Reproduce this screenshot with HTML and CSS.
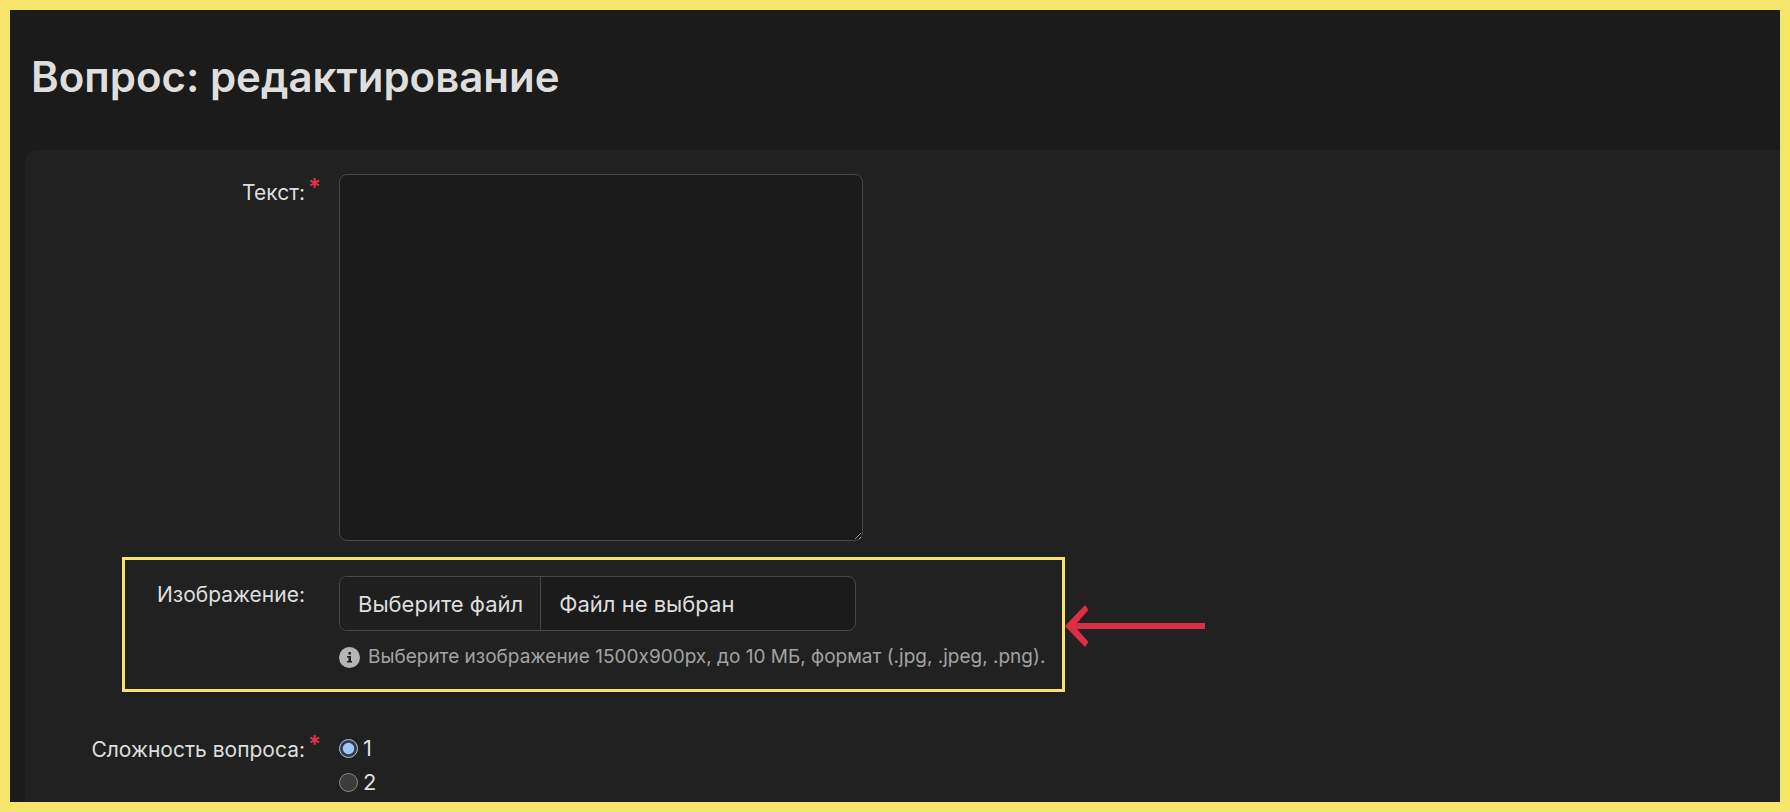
FILE: index.html
```html
<!DOCTYPE html>
<html lang="ru">
<head>
    <meta charset="UTF-8">
    <meta name="viewport" content="width=device-width, initial-scale=1.0">
    <title>Вопрос: редактирование</title>
    <link rel="stylesheet" href="styles.css">
</head>
<body>
    <main class="page">
        <h1>Вопрос: редактирование</h1>

        <form class="panel">
            <div class="form-row">
                <label class="form-label required" for="text">Текст:</label>
                <textarea id="text" required></textarea>
            </div>

            <div class="form-row highlight">
                <label class="form-label" for="image">Изображение:</label>
                <div class="form-field">
                    <div class="file">
                        <span class="file-button">Выберите файл</span>
                        <span class="file-name">Файл не выбран</span>
                        <input type="file" id="image" accept=".jpg,.jpeg,.png">
                    </div>
                    <p class="hint">
                        <svg class="hint-icon" viewBox="0 0 21 21" aria-hidden="true">
                            <circle cx="10.5" cy="10.5" r="10.5" fill="#b5b5b5"/>
                            <path d="M9.500 5h2.500v2.500H9.500zM8 9h4v5h1v1.500H8V14h1.500v-3.500H8z" fill="#212121"/>
                        </svg>
                        Выберите изображение 1500x900px, до 10 МБ, формат (.jpg, .jpeg, .png).
                    </p>
                </div>
                <svg class="arrow" viewBox="0 0 140 42" aria-hidden="true">
                    <path d="M140 18H12L23.500 5 20 0 0 21l20 21 3.500-5L12 24h128z" fill="#dc2e45"/>
                </svg>
            </div>

            <fieldset class="form-row">
                <legend class="form-label required">Сложность вопроса:</legend>
                <div class="form-field radios">
                    <label><input type="radio" name="level" value="1" checked>1</label>
                    <label><input type="radio" name="level" value="2">2</label>
                </div>
            </fieldset>
        </form>
    </main>
</body>
</html>
```
FILE: styles.css
```css
* {
    margin: 0;
    padding: 0;
    box-sizing: border-box;
}
body {
    height: 100vh;
    overflow: hidden;
    border: 10px solid #f5e66b;
    background: #1b1b1b;
    color: #dedede;
    font-family: Inter, sans-serif;
    font-size: 22px;
    line-height: 28px;
    color-scheme: dark;
}
.page {
    height: 100%;
    display: flex;
    flex-direction: column;
    padding-left: 15px;
}
h1 {
    padding: 41px 6px 47px;
    font-size: 42px;
    line-height: 52px;
    font-weight: 600;
}
.panel {
    flex: 1;
    padding-top: 24px;
    border-top-left-radius: 12px;
    background: #212121;
}
.form-row {
    position: relative;
    display: flex;
    align-items: flex-start;
    border: none;
}
.form-label {
    position: relative;
    flex: none;
    width: 314px;
    padding: 5px 34px 0 0;
    font-size: 21px;
    text-align: right;
}
.required::after {
    content: "*";
    position: absolute;
    top: 0;
    right: 18px;
    color: #dc3545;
    font-size: 24px;
    font-weight: 600;
}
textarea {
    width: 524px;
    height: 367px;
    padding: 12px 18px;
    border: 1px solid #484848;
    border-radius: 8px;
    background: #1b1b1b;
    color: inherit;
    font: inherit;
    resize: both;
}
.highlight {
    width: fit-content;
    margin: 16px 0 39px 97px;
    padding: 16px 17px 18px 0;
    border: 3px solid #f9e36e;
}
.highlight .form-label {
    width: 214px;
}
.file {
    position: relative;
    display: flex;
    width: 517px;
    border: 1px solid #484848;
    border-radius: 8px;
    background: #1b1b1b;
    overflow: hidden;
}
.file span {
    padding: 13px 17px 12px 18px;
}
.file-button {
    border-right: 1px solid #484848;
    background: #1f1f1f;
}
.file input {
    position: absolute;
    inset: 0;
    opacity: 0;
    cursor: pointer;
}
.hint {
    display: flex;
    align-items: center;
    gap: 8px;
    margin-top: 12px;
    color: #a3a3a3;
    font-size: 19px;
}
.hint-icon {
    width: 21px;
    height: 21px;
}
.arrow {
    position: absolute;
    top: 45px;
    left: calc(100% + 3px);
    width: 140px;
    height: 42px;
}
fieldset .form-label {
    float: left;
}
.radios label {
    display: flex;
    align-items: center;
    gap: 5px;
    height: 34px;
}
.radios input {
    width: 19px;
    height: 19px;
}
```
